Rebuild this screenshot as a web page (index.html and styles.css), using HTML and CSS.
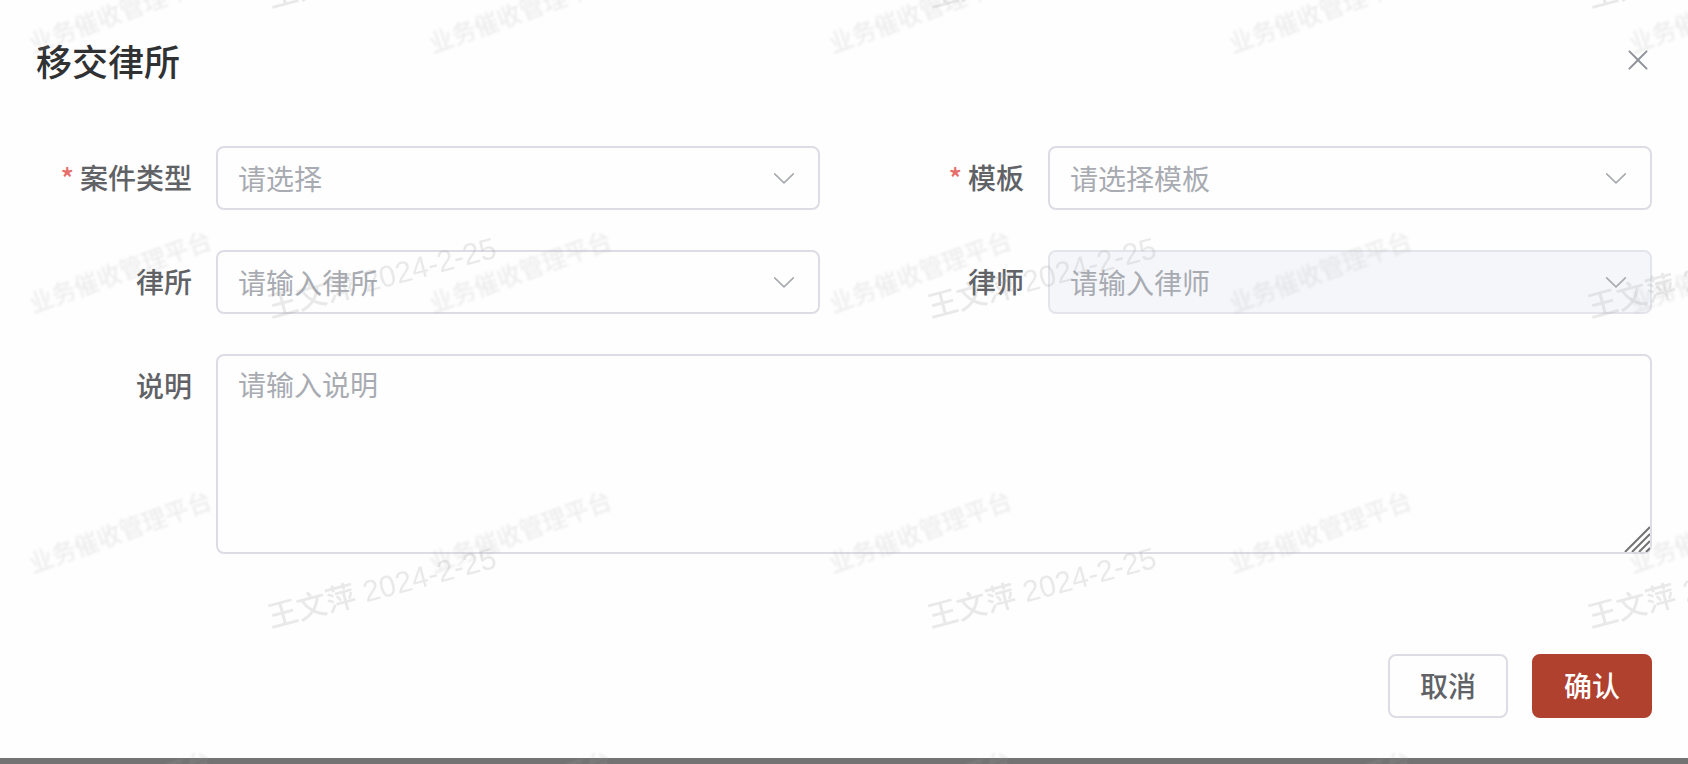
FILE: index.html
```
<!DOCTYPE html>
<html lang="zh-CN">
<head>
  <meta charset="UTF-8">
  <title>移交律所</title>
  <link rel="stylesheet" href="styles.css">
</head>
<body>
  <div class="dialog" role="dialog" aria-labelledby="dialogTitle">
    <div class="dialog-header">
      <h1 id="dialogTitle">移交律所</h1>
      <button type="button" class="close" aria-label="关闭">
        <svg viewBox="0 0 1024 1024"><path fill="currentColor" d="M764.288 214.592 512 466.88 259.712 214.592a31.936 31.936 0 0 0-45.12 45.12L466.752 512 214.528 764.224a31.936 31.936 0 1 0 45.12 45.184L512 557.184l252.288 252.288a31.936 31.936 0 0 0 45.12-45.12L557.12 512.064l252.288-252.352a31.936 31.936 0 1 0-45.12-45.184z"/></svg>
      </button>
    </div>

    <form id="transferForm" class="form">
      <div class="form-item">
        <label class="required" for="caseType">案件类型</label>
        <div class="select">
          <select id="caseType"><option value="">请选择</option></select>
          <svg class="arrow" viewBox="0 0 1024 1024"><path fill="currentColor" d="M831.872 340.864 512 652.672 192.128 340.864a30.592 30.592 0 0 0-42.752 0 29.12 29.12 0 0 0 0 41.6L489.664 714.24a32 32 0 0 0 44.672 0l340.288-331.712a29.12 29.12 0 0 0 0-41.728 30.592 30.592 0 0 0-42.752 0z"/></svg>
        </div>
      </div>
      <div class="form-item">
        <label class="required" for="template">模板</label>
        <div class="select">
          <select id="template"><option value="">请选择模板</option></select>
          <svg class="arrow" viewBox="0 0 1024 1024"><path fill="currentColor" d="M831.872 340.864 512 652.672 192.128 340.864a30.592 30.592 0 0 0-42.752 0 29.12 29.12 0 0 0 0 41.6L489.664 714.24a32 32 0 0 0 44.672 0l340.288-331.712a29.12 29.12 0 0 0 0-41.728 30.592 30.592 0 0 0-42.752 0z"/></svg>
        </div>
      </div>
      <div class="form-item">
        <label for="lawFirm">律所</label>
        <div class="select">
          <select id="lawFirm"><option value="">请输入律所</option></select>
          <svg class="arrow" viewBox="0 0 1024 1024"><path fill="currentColor" d="M831.872 340.864 512 652.672 192.128 340.864a30.592 30.592 0 0 0-42.752 0 29.12 29.12 0 0 0 0 41.6L489.664 714.24a32 32 0 0 0 44.672 0l340.288-331.712a29.12 29.12 0 0 0 0-41.728 30.592 30.592 0 0 0-42.752 0z"/></svg>
        </div>
      </div>
      <div class="form-item">
        <label for="lawyer">律师</label>
        <div class="select">
          <select id="lawyer" disabled><option value="">请输入律师</option></select>
          <svg class="arrow" viewBox="0 0 1024 1024"><path fill="currentColor" d="M831.872 340.864 512 652.672 192.128 340.864a30.592 30.592 0 0 0-42.752 0 29.12 29.12 0 0 0 0 41.6L489.664 714.24a32 32 0 0 0 44.672 0l340.288-331.712a29.12 29.12 0 0 0 0-41.728 30.592 30.592 0 0 0-42.752 0z"/></svg>
        </div>
      </div>
      <div class="form-item full">
        <label for="remark">说明</label>
        <div class="textarea">
          <textarea id="remark" placeholder="请输入说明"></textarea>
          <svg class="grip" viewBox="0 0 26 26"><path d="M1 26 26 1M8 26 26 8M15 26 26 15M22 26 26 22"/></svg>
        </div>
      </div>
    </form>

    <div class="dialog-footer">
      <button type="button" class="btn">取消</button>
      <button type="submit" form="transferForm" class="btn primary">确认</button>
    </div>
  </div>

  <!-- 水印 -->
  <svg class="watermark" aria-hidden="true">
    <defs>
      <pattern id="markPlatform" x="0" y="-60" width="400" height="260" patternUnits="userSpaceOnUse">
        <text class="mark-platform" transform="translate(33 113) rotate(-20)">业务催收管理平台</text>
      </pattern>
      <pattern id="markUser" x="0" y="-100" width="660" height="310" patternUnits="userSpaceOnUse">
        <text class="mark-user" transform="translate(271 108) rotate(-15)">王文萍 2024-2-25</text>
      </pattern>
    </defs>
    <rect width="100%" height="100%" fill="url(#markPlatform)"/>
    <rect width="100%" height="100%" fill="url(#markUser)"/>
  </svg>
</body>
</html>
```

FILE: styles.css
```
* {
  box-sizing: border-box;
}

body {
  margin: 0;
  background: #737373;
  font-family: "Noto Sans CJK SC", sans-serif;
  font-size: 28px;
  color: #606266;
}

.dialog {
  padding: 36px 36px 40px;
  background: #fefefe;
}

.dialog-header {
  display: flex;
  justify-content: space-between;
  align-items: center;
  margin-bottom: 62px;
}

h1 {
  margin: 0;
  font-size: 36px;
  font-weight: 500;
  line-height: 48px;
  color: #303133;
}

.close {
  width: 32px;
  height: 32px;
  margin-right: -2px;
  padding: 0;
  border: none;
  background: none;
  color: #909399;
  cursor: pointer;
}

.close svg {
  display: block;
}

.form {
  display: grid;
  grid-template-columns: 1fr 1fr;
  gap: 40px 48px;
}

.form-item {
  display: flex;
}

.full {
  grid-column: 1 / -1;
}

label {
  flex: none;
  width: 180px;
  padding-right: 24px;
  font-weight: 500;
  line-height: 62px;
  text-align: right;
}

.required::before {
  content: "*";
  margin-right: 6px;
  color: #e66f6c;
}

.select,
.textarea {
  position: relative;
  flex: 1;
}

select,
textarea {
  display: block;
  width: 100%;
  border: 2px solid #dcdce5;
  border-radius: 8px;
  background: #fefefe;
  font: inherit;
  color: #a8abb2;
}

select {
  height: 64px;
  padding: 0 60px 0 20px;
  appearance: none;
  cursor: pointer;
}

select:disabled {
  border-color: #e4e5ec;
  background: #f5f6fa;
  color: #a8abb2;
  opacity: 1;
  cursor: not-allowed;
}

textarea {
  height: 200px;
  padding: 7px 20px;
  line-height: 42px;
  resize: none;
}

textarea::placeholder {
  color: #a8abb2;
}

.arrow {
  position: absolute;
  top: 18px;
  right: 22px;
  width: 28px;
  height: 28px;
  color: #a8abb2;
  pointer-events: none;
}

.grip {
  position: absolute;
  right: 2px;
  bottom: 2px;
  width: 26px;
  height: 26px;
  fill: none;
  stroke: #737373;
  stroke-width: 2;
  pointer-events: none;
}

.dialog-footer {
  display: flex;
  justify-content: flex-end;
  gap: 24px;
  margin-top: 100px;
}

.btn {
  width: 120px;
  height: 64px;
  padding: 0 0 2px;
  border: 2px solid #dcdce5;
  border-radius: 8px;
  background: #fefefe;
  font: inherit;
  font-weight: 500;
  color: #606266;
  cursor: pointer;
}

.primary {
  border-color: #af412e;
  background: #af412e;
  color: #fff;
}

.watermark {
  position: fixed;
  top: 0;
  left: 0;
  width: 100%;
  height: 100%;
  pointer-events: none;
}

.mark-platform {
  font-size: 24px;
  font-weight: 500;
  fill: rgba(170, 170, 170, 0.2);
  filter: blur(1px);
}

.mark-user {
  font-family: "Liberation Sans", "Noto Sans CJK SC", sans-serif;
  font-size: 30px;
  font-weight: 500;
  fill: rgba(160, 160, 160, 0.22);
}
```
